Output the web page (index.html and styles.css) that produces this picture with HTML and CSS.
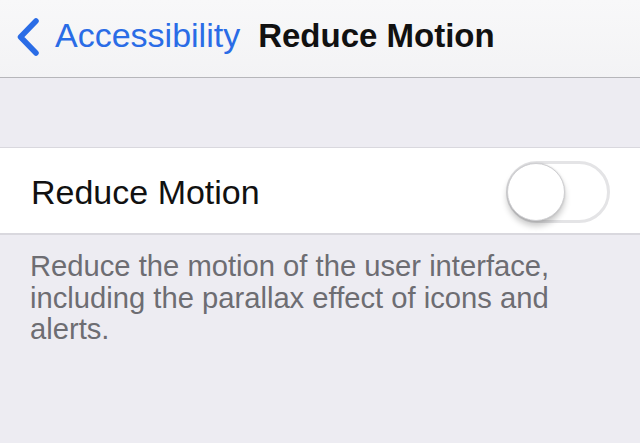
FILE: index.html
```html
<!DOCTYPE html>
<html>
<head>
<meta charset="utf-8">
<link rel="stylesheet" href="styles.css">
</head>
<body>
<header class="nav">
  <div class="back">
    <svg class="chev" width="26" height="38" viewBox="0 0 26 38"><path d="M21 3 L5.5 19 L21 35" fill="none" stroke="#2a6ce6" stroke-width="5.5" stroke-linecap="round" stroke-linejoin="round"/></svg>
    <span class="back-label">Accessibility</span>
  </div>
  <h1 class="title">Reduce Motion</h1>
</header>
<div class="gap"></div>
<section class="cell">
  <span class="cell-label">Reduce Motion</span>
  <div class="switch"><div class="knob"></div></div>
</section>
<p class="footer">Reduce the motion of the user interface, including the parallax effect of icons and alerts.</p>
</body>
</html>
```
FILE: styles.css
```css
html, body {
  margin: 0;
  padding: 0;
  height: 100%;
  background: #edecf2;
  font-family: "Liberation Sans", Arial, sans-serif;
}
.nav {
  height: 71px;
  padding: 0 0 6px 15px;
  background: linear-gradient(#f8f8f9, #f3f3f5);
  border-bottom: 1px solid #b6b6ba;
  display: flex;
  align-items: center;
  box-sizing: content-box;
}
.back {
  display: flex;
  align-items: center;
}
.chev {
  display: block;
  margin-top: 2px;
}
.back-label {
  font-size: 34px;
  color: #2a6ce6;
  margin-left: 14px;
}
.title {
  margin: 0 0 0 18px;
  font-size: 33px;
  font-weight: bold;
  color: #111;
}
.gap {
  height: 69px;
}
.cell {
  background: #fff;
  border-top: 1px solid #d9d8de;
  border-bottom: 2px solid #d9d8de;
  height: 85px;
  display: flex;
  align-items: center;
  justify-content: space-between;
  padding: 0 30px 0 31px;
}
.cell-label {
  font-size: 34px;
  color: #111;
  margin-top: 3px;
}
.switch {
  width: 98px;
  height: 56px;
  border: 3px solid #e4e4e6;
  border-radius: 31px;
  background: #fff;
  position: relative;
  margin-top: 2px;
}
.knob {
  position: absolute;
  left: -2px;
  top: -1px;
  width: 56px;
  height: 56px;
  border-radius: 50%;
  background: #fff;
  border: 1px solid #cfcfd2;
  box-shadow: 0 5px 6px rgba(0,0,0,0.22), 0 0 2px rgba(0,0,0,0.15);
}
.footer {
  margin: 16px 88px 0 30px;
  font-size: 29.2px;
  line-height: 31.5px;
  color: #6d6d72;
}
```
